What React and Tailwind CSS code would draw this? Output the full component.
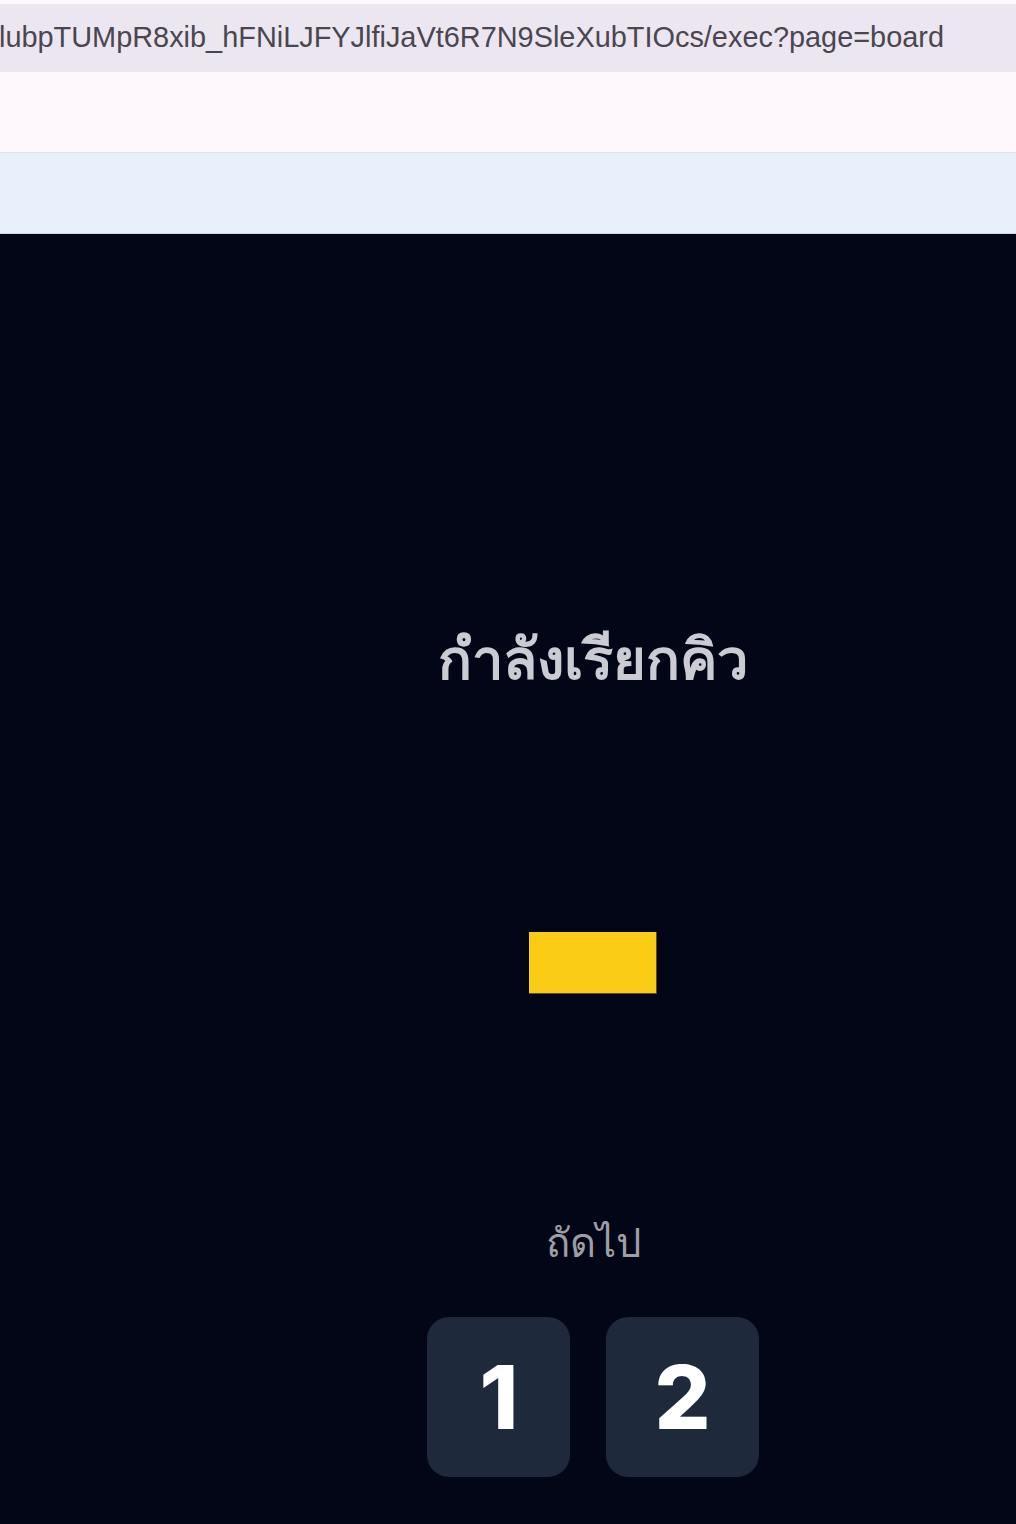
import React from "react";

export default function App() {
  return (
    <div className="w-[1016px] h-[1524px] overflow-hidden flex flex-col bg-[#020617]" style={{ fontFamily: "Inter, 'Noto Sans', sans-serif" }}>
      <div className="h-[4px] bg-[#fdf8fd] shrink-0" />
      <div className="h-[68px] shrink-0 bg-[#ece6f0] flex items-center justify-end pr-[72px] overflow-hidden">
        <span className="whitespace-nowrap text-[28.9px] text-[#4a4650]" style={{ fontFamily: "'Liberation Sans', Arial, sans-serif" }}>
          lubpTUMpR8xib_hFNiLJFYJlfiJaVt6R7N9SleXubTIOcs/exec?page=board
        </span>
      </div>
      <div className="h-[81px] shrink-0 bg-[#fef8fd] border-b border-[#e4dfe5]" />
      <div className="h-[81px] shrink-0 bg-[#e8f0fc] border-b border-[#cfd6de]" />
      <div className="flex-1 flex flex-col items-center pl-[170px] pt-[397px]">
        <h1 className="text-[56px] leading-none font-bold text-[#cbcbd3]">กำลังเรียกคิว</h1>
        <div className="mt-[245px] w-[128px] h-[62px] bg-[#facc15] border-r border-b border-[#5a5030]" />
        <div className="mt-[229px] text-[40px] leading-none font-medium text-[#9e9ea6]">ถัดไป</div>
        <div className="mt-[54px] flex gap-[36px]">
          <div className="min-w-[143px] text-center rounded-[22px] bg-[#1e293b] px-12 py-9 text-[88px] leading-none font-extrabold text-white">1</div>
          <div className="min-w-[143px] text-center rounded-[22px] bg-[#1e293b] px-12 py-9 text-[88px] leading-none font-extrabold text-white">2</div>
        </div>
      </div>
    </div>
  );
}
